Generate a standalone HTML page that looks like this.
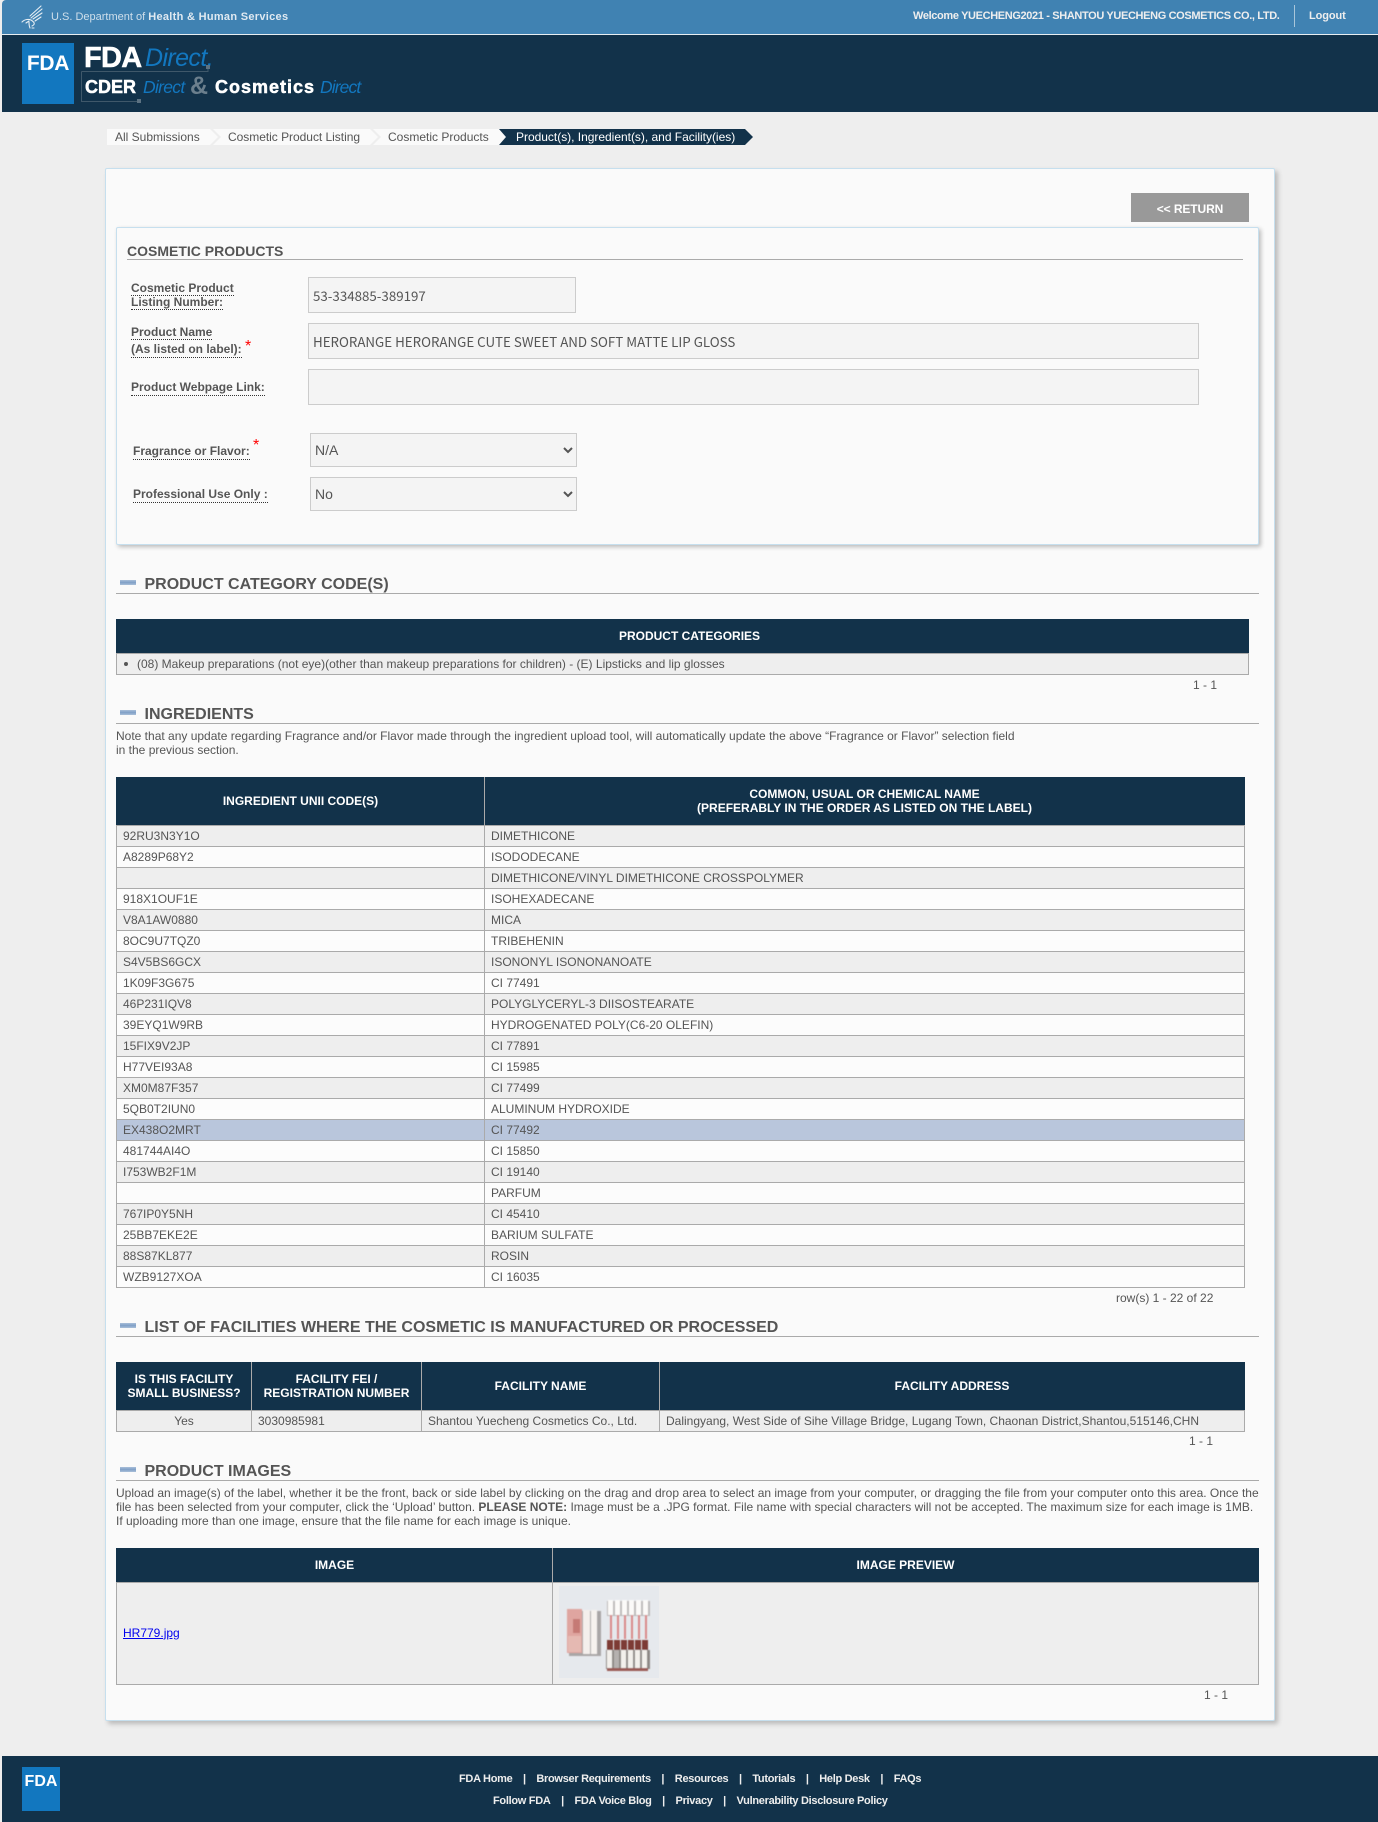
<!DOCTYPE html>
<html lang="en"><head><meta charset="utf-8"><title>Product(s), Ingredient(s), and Facility(ies)</title>
<style>
*{box-sizing:border-box}
html,body{margin:0;padding:0}
body{position:relative;width:1378px;height:1822px;overflow:hidden;background:#eee;font-family:"Liberation Sans",Arial,sans-serif;font-size:12px;color:#555}
.a{position:absolute}
.t{position:absolute;white-space:nowrap}
.lb{position:absolute;white-space:nowrap;font-weight:bold;font-size:12px;line-height:14px;color:#555;border-bottom:1px dotted #333}
.h{position:absolute;left:144.5px;white-space:nowrap;font-weight:bold;font-size:16px;line-height:18px;color:#555}
.ic{position:absolute;left:120px;width:16px;height:5px;background:linear-gradient(#a9bfd9,#7f9fc6 50%,#a9bfd9)}
.ln{position:absolute;left:116px;width:1143px;height:1px;background:#aaa}
.inp{position:absolute;background:#f4f4f4;border:1px solid #ccc;font-family:"Noto Sans CJK SC","Liberation Sans",sans-serif;font-size:13.33px;color:#555;padding-left:4px;height:36px;line-height:35px;white-space:nowrap}
select{position:absolute;left:310px;width:267px;height:34px;background-color:#f4f4f4;border:1px solid #ccc;font-family:"Liberation Sans",sans-serif;font-size:14px;color:#555;padding-left:0;border-radius:0}
table{position:absolute;border-collapse:collapse;table-layout:fixed;font-size:12px;color:#555}
th{background:#12324a;color:#fff;font-weight:bold;font-size:12px;line-height:14px;border:1px solid #aaa;border-top-color:#12324a;padding:0 0 2px;text-align:center}
th:first-child{border-left-color:#12324a}th:last-child{border-right-color:#12324a}
td{border:1px solid #aaa;padding:0 6px;height:21px;line-height:14px;white-space:nowrap;overflow:hidden}
tr.o td{background:#eee}tr.e td{background:#fcfcfc}tr.s td{background:#b9c6dc}
.f{position:absolute;white-space:nowrap;font-weight:bold;font-size:11px;line-height:14px;color:#eee;letter-spacing:-.3px}
.f i{font-style:normal;display:inline-block;margin:0 10.6px}
.req{position:absolute;color:#f00;font-size:16px;line-height:15px}
</style></head><body>
<div class="a" style="left:2px;top:0;width:1376px;height:34px;background:#4082b2;border-top-left-radius:4px"></div>
<div class="a" style="left:2px;top:34px;width:1376px;height:1px;background:#e8eef2"></div>
<div class="a" style="left:2px;top:35px;width:1376px;height:77px;background:#12324a"></div>
<svg class="a" style="left:21px;top:4px" width="24" height="25" viewBox="0 0 24 25" fill="none" stroke="#e6eef4" stroke-width="1.1" stroke-linecap="round"><path d="M9 12L20 2M10 14L21 5M12 15L21 9M14 17L20 13"/><path d="M1 18C4 15 8 15 10 16C13 18 15 20 11 22M8 18C8 20 8 22 9 24M11 24L13 24M5 19L8 17"/></svg>
<div class="t" style="left:51px;top:9px;line-height:16px;font-size:11px;color:#cfdfeb">U.S. Department of <b style="color:#dfe9f1;letter-spacing:.3px">Health &amp; Human Services</b></div>
<div class="t" style="left:913px;top:9px;line-height:15px;font-size:11px;font-weight:bold;color:#eee;letter-spacing:-.36px">Welcome YUECHENG2021 - SHANTOU YUECHENG COSMETICS CO., LTD.</div>
<div class="a" style="left:1294px;top:5px;width:1px;height:22px;background:#a9c6da"></div>
<div class="t" style="left:1309px;top:9px;line-height:15px;font-size:11px;font-weight:bold;color:#eee;letter-spacing:-.1px">Logout</div>
<!-- logo -->
<div class="a" style="left:22px;top:43px;width:52px;height:61px;background:#1277bf"></div>
<div class="t" style="left:22px;top:52px;width:52px;text-align:center;font-size:21px;line-height:24px;font-weight:bold;color:#fff;letter-spacing:-.3px">FDA</div>
<div class="t" style="left:84px;top:42px;font-size:29px;line-height:32px;font-weight:bold;color:#fff;-webkit-text-stroke:.5px #fff;letter-spacing:-.7px">FDA</div>
<div class="t" style="left:145px;top:42px;font-size:25px;line-height:32px;font-style:italic;color:#1277bf;letter-spacing:-.6px">Direct,</div>
<svg class="a" style="left:78px;top:62px" width="140" height="44" fill="none" stroke="#3f586a" stroke-width="1"><path d="M3.5 9.5H130V5M3.5 9.5V39.5H60"/><rect x="128" y="3" width="4" height="4" fill="#5c7282" stroke="none"/><rect x="59" y="37" width="4" height="4" fill="#5c7282" stroke="none"/></svg>
<div class="t" style="left:85px;top:76px;font-size:18px;line-height:22px;font-weight:bold;color:#fff;-webkit-text-stroke:.5px #fff">CDER</div>
<div class="t" style="left:143px;top:76px;font-size:17.5px;line-height:22px;font-style:italic;color:#1277bf;letter-spacing:-.7px">Direct</div>
<div class="t" style="left:190px;top:72px;font-size:25px;line-height:28px;font-weight:bold;color:#6b7f8d">&amp;</div>
<div class="t" style="left:215px;top:76px;font-size:18px;line-height:22px;font-weight:bold;color:#fff;-webkit-text-stroke:.5px #fff;letter-spacing:1px">Cosmetics</div>
<div class="t" style="left:320px;top:76px;font-size:17.5px;line-height:22px;font-style:italic;color:#1277bf;letter-spacing:-.9px">Direct</div>
<!-- breadcrumb -->
<svg class="a" style="left:107px;top:129px" width="650" height="16"><path d="M0 0H103L111 8 103 16H0Z" fill="#fafafa"/><path d="M106 0H263L271 8 263 16H106L114 8Z" fill="#fafafa"/><path d="M266 0H392L399 8 392 16H266L274 8Z" fill="#fafafa"/><path d="M392 0H638L646 8 638 16H392L399 8Z" fill="#12324a"/></svg>
<div class="t" style="left:115px;top:129px;line-height:16px;font-size:12px">All Submissions</div>
<div class="t" style="left:228px;top:129px;line-height:16px;font-size:12px;letter-spacing:-.03px">Cosmetic Product Listing</div>
<div class="t" style="left:388px;top:129px;line-height:16px;font-size:12px">Cosmetic Products</div>
<div class="t" style="left:516px;top:129px;line-height:16px;font-size:12px;color:#fff;letter-spacing:-.02px">Product(s), Ingredient(s), and Facility(ies)</div>
<!-- main card -->
<div class="a" style="left:105px;top:168px;width:1170px;height:1553px;background:#fafafa;border:1px solid #c6dfee;border-radius:2px;box-shadow:3px 3px 5px #bbb"></div>
<div class="a" style="left:1131px;top:193px;width:118px;height:29px;background:#999;color:#fff;font-weight:bold;font-size:12px;line-height:33px;text-align:center;letter-spacing:-.1px">&lt;&lt; RETURN</div>
<!-- inner card -->
<div class="a" style="left:116px;top:227px;width:1143px;height:318px;background:#fafafa;border:1px solid #c6dfee;border-radius:2px;box-shadow:2px 2px 4px #bbb"></div>
<div class="t" style="left:127px;top:243px;font-size:14px;line-height:17px;font-weight:bold;color:#555">COSMETIC PRODUCTS</div>
<div class="a" style="left:127px;top:259px;width:1116px;height:1px;background:#aaa"></div>
<div class="lb" style="left:131px;top:281px;height:15px">Cosmetic Product</div>
<div class="lb" style="left:131px;top:295px;height:15px">Listing Number:</div>
<div class="inp" style="left:308px;top:277px;width:268px">53-334885-389197</div>
<div class="lb" style="left:131px;top:325px;height:15px">Product Name</div>
<div class="lb" style="left:131px;top:342px;height:16px">(As listed on label):</div>
<div class="req" style="left:245px;top:339px">*</div>
<div class="inp" style="left:308px;top:323px;width:891px">HERORANGE HERORANGE CUTE SWEET AND SOFT MATTE LIP GLOSS</div>
<div class="lb" style="left:131px;top:380px;height:16px">Product Webpage Link:</div>
<div class="inp" style="left:308px;top:369px;width:891px"></div>
<div class="lb" style="left:133px;top:444px;height:16px">Fragrance or Flavor:</div>
<div class="req" style="left:253px;top:438px">*</div>
<select style="top:433px"><option>N/A</option></select>
<div class="lb" style="left:133px;top:487px;height:16px">Professional Use Only :</div>
<select style="top:477px"><option>No</option></select>
<!-- categories -->
<div class="ic" style="top:580px"></div><div class="h" style="top:576px">PRODUCT CATEGORY CODE(S)</div><div class="ln" style="top:593px"></div>
<table style="left:116px;top:619px;width:1133px"><tr><th style="height:34px;padding-left:14px">PRODUCT CATEGORIES</th></tr><tr class="o"><td style="padding-left:4px"><span style="display:inline-block;width:4px;height:4px;border-radius:50%;background:#555;margin:0 9px 2px 3px"></span>(08) Makeup preparations (not eye)(other than makeup preparations for children) - (E) Lipsticks and lip glosses</td></tr></table>
<div class="t" style="left:1193px;top:678px;line-height:14px">1 - 1</div>
<!-- ingredients -->
<div class="ic" style="top:710px"></div><div class="h" style="top:706px">INGREDIENTS</div><div class="ln" style="top:723px"></div>
<div class="t" style="left:116px;top:729px;line-height:14px">Note that any update regarding Fragrance and/or Flavor made through the ingredient upload tool, will automatically update the above “Fragrance or Flavor” selection field<br>in the previous section.</div>
<table style="left:116px;top:777px;width:1129px">
<colgroup><col style="width:368px"><col></colgroup>
<tr><th style="height:48px">INGREDIENT UNII CODE(S)</th><th>COMMON, USUAL OR CHEMICAL NAME<br>(PREFERABLY IN THE ORDER AS LISTED ON THE LABEL)</th></tr>
<tr class="o"><td>92RU3N3Y1O</td><td>DIMETHICONE</td></tr>
<tr class="e"><td>A8289P68Y2</td><td>ISODODECANE</td></tr>
<tr class="o"><td></td><td>DIMETHICONE/VINYL DIMETHICONE CROSSPOLYMER</td></tr>
<tr class="e"><td>918X1OUF1E</td><td>ISOHEXADECANE</td></tr>
<tr class="o"><td>V8A1AW0880</td><td>MICA</td></tr>
<tr class="e"><td>8OC9U7TQZ0</td><td>TRIBEHENIN</td></tr>
<tr class="o"><td>S4V5BS6GCX</td><td>ISONONYL ISONONANOATE</td></tr>
<tr class="e"><td>1K09F3G675</td><td>CI 77491</td></tr>
<tr class="o"><td>46P231IQV8</td><td>POLYGLYCERYL-3 DIISOSTEARATE</td></tr>
<tr class="e"><td>39EYQ1W9RB</td><td>HYDROGENATED POLY(C6-20 OLEFIN)</td></tr>
<tr class="o"><td>15FIX9V2JP</td><td>CI 77891</td></tr>
<tr class="e"><td>H77VEI93A8</td><td>CI 15985</td></tr>
<tr class="o"><td>XM0M87F357</td><td>CI 77499</td></tr>
<tr class="e"><td>5QB0T2IUN0</td><td>ALUMINUM HYDROXIDE</td></tr>
<tr class="s"><td>EX438O2MRT</td><td>CI 77492</td></tr>
<tr class="e"><td>481744AI4O</td><td>CI 15850</td></tr>
<tr class="o"><td>I753WB2F1M</td><td>CI 19140</td></tr>
<tr class="e"><td></td><td>PARFUM</td></tr>
<tr class="o"><td>767IP0Y5NH</td><td>CI 45410</td></tr>
<tr class="e"><td>25BB7EKE2E</td><td>BARIUM SULFATE</td></tr>
<tr class="o"><td>88S87KL877</td><td>ROSIN</td></tr>
<tr class="e"><td>WZB9127XOA</td><td>CI 16035</td></tr>
</table>
<div class="t" style="left:1116px;top:1291px;line-height:14px">row(s) 1 - 22 of 22</div>
<!-- facilities -->
<div class="ic" style="top:1323px"></div><div class="h" style="top:1319px">LIST OF FACILITIES WHERE THE COSMETIC IS MANUFACTURED OR PROCESSED</div><div class="ln" style="top:1336px"></div>
<table style="left:116px;top:1362px;width:1129px">
<colgroup><col style="width:135px"><col style="width:170px"><col style="width:238px"><col></colgroup>
<tr><th style="height:48px">IS THIS FACILITY<br>SMALL BUSINESS?</th><th>FACILITY FEI /<br>REGISTRATION NUMBER</th><th>FACILITY NAME</th><th>FACILITY ADDRESS</th></tr>
<tr class="o"><td style="text-align:center">Yes</td><td>3030985981</td><td>Shantou Yuecheng Cosmetics Co., Ltd.</td><td>Dalingyang, West Side of Sihe Village Bridge, Lugang Town, Chaonan District,Shantou,515146,CHN</td></tr>
</table>
<div class="t" style="left:1189px;top:1434px;line-height:14px">1 - 1</div>
<!-- images -->
<div class="ic" style="top:1467px"></div><div class="h" style="top:1463px">PRODUCT IMAGES</div><div class="ln" style="top:1480px"></div>
<div class="t" style="left:116px;top:1486px;line-height:14px">Upload an image(s) of the label, whether it be the front, back or side label by clicking on the drag and drop area to select an image from your computer, or dragging the file from your computer onto this area. Once the<br>file has been selected from your computer, click the ‘Upload’ button. <b>PLEASE NOTE:</b> Image must be a .JPG format. File name with special characters will not be accepted. The maximum size for each image is 1MB.<br>If uploading more than one image, ensure that the file name for each image is unique.</div>
<table style="left:116px;top:1548px;width:1143px">
<colgroup><col style="width:436px"><col></colgroup>
<tr><th style="height:34px">IMAGE</th><th>IMAGE PREVIEW</th></tr>
<tr class="o"><td style="height:102px;padding-bottom:2px"><span style="color:#00e;text-decoration:underline">HR779.jpg</span></td><td></td></tr>
</table>
<svg class="a" style="left:559px;top:1586px" width="100" height="92" viewBox="0 0 100 92">
<defs><filter id="b"><feGaussianBlur stdDeviation=".6"/></filter></defs>
<rect width="100" height="92" fill="#e6e9ed"/>
<g filter="url(#b)">
<rect x="10" y="25" width="32" height="45" fill="#a9a6a6"/>
<rect x="8" y="23" width="15" height="44" fill="#dfa5a0"/><rect x="14" y="33" width="7" height="14" fill="#c57a74"/><rect x="9" y="50" width="13" height="16" fill="#e5b9b2"/>
<rect x="24" y="24" width="7" height="44" fill="#f4efec"/><rect x="32" y="24" width="6" height="44" fill="#f6f2ee"/>
<rect x="48" y="15" width="43" height="15" fill="#bcb9b9"/>
<rect x="49" y="14" width="5" height="15" fill="#fbfaf8"/><rect x="56" y="14" width="5" height="15" fill="#fbfaf8"/><rect x="63" y="14" width="5" height="15" fill="#fbfaf8"/><rect x="70" y="14" width="5" height="15" fill="#fbfaf8"/><rect x="77" y="14" width="5" height="15" fill="#fbfaf8"/><rect x="84" y="14" width="5" height="15" fill="#fbfaf8"/>
<g fill="#d98a8a"><rect x="51" y="29" width="2" height="24"/><rect x="58" y="29" width="2" height="24"/><rect x="65" y="29" width="2" height="24"/><rect x="72" y="29" width="2" height="24"/><rect x="79" y="29" width="2" height="24"/><rect x="86" y="29" width="2" height="24"/></g>
<g fill="#7d3a36"><rect x="48" y="54" width="6" height="10"/><rect x="55" y="54" width="6" height="10"/><rect x="62" y="54" width="6" height="10"/><rect x="69" y="54" width="6" height="10"/><rect x="76" y="54" width="6" height="10"/><rect x="83" y="54" width="6" height="10"/></g>
<rect x="47" y="64" width="44" height="19" fill="#8d8885"/>
<g fill="#f3f0ec"><rect x="48" y="64" width="5" height="18"/><rect x="55" y="64" width="5" height="18" fill="#b5b1af"/><rect x="62" y="64" width="5" height="18"/><rect x="69" y="64" width="5" height="18"/><rect x="76" y="64" width="5" height="18"/><rect x="83" y="64" width="5" height="18"/></g>
<rect x="48" y="82" width="41" height="3" fill="#9a5a55"/>
</g></svg>
<div class="t" style="left:1204px;top:1688px;line-height:14px">1 - 1</div>
<!-- footer -->
<div class="a" style="left:2px;top:1756px;width:1376px;height:66px;background:#12324a"></div>
<div class="a" style="left:22px;top:1767px;width:38px;height:44px;background:#1277bf"></div>
<div class="t" style="left:22px;top:1772px;width:38px;text-align:center;font-size:16px;line-height:20px;font-weight:bold;color:#fff;letter-spacing:0">FDA</div>
<div class="f" style="left:459px;top:1772px">FDA Home<i>|</i>Browser Requirements<i>|</i>Resources<i>|</i>Tutorials<i>|</i>Help Desk<i>|</i>FAQs</div>
<div class="f" style="left:493px;top:1794px">Follow FDA<i>|</i>FDA Voice Blog<i>|</i>Privacy<i>|</i>Vulnerability Disclosure Policy</div>
</body></html>
